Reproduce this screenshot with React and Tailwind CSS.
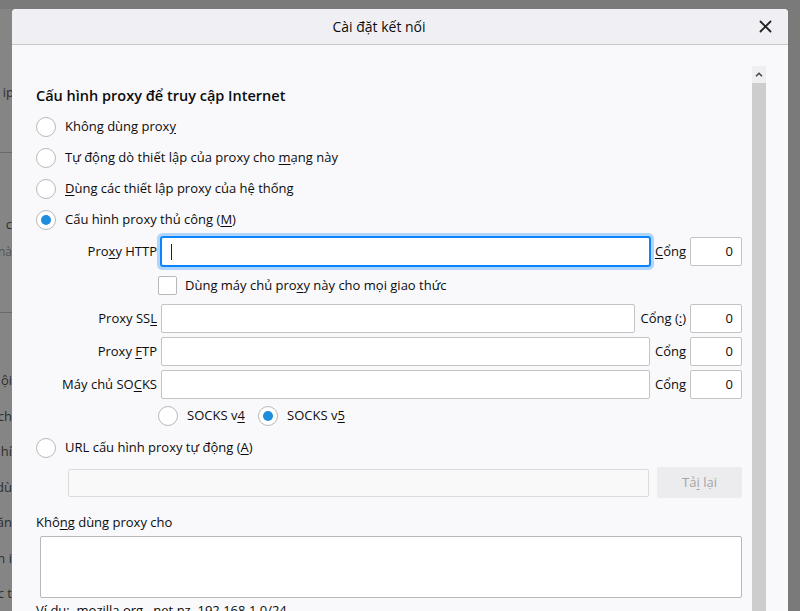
import React from 'react';

const font = { fontFamily: '"Open Sans", "Noto Sans", sans-serif' };

function Radio({ checked }) {
  return (
    <span className="flex h-[20px] w-[20px] shrink-0 items-center justify-center rounded-full border border-[#b8b8ba] bg-white">
      {checked && <span className="h-[10px] w-[10px] rounded-full bg-[#1f8ddb]" />}
    </span>
  );
}

function RadioRow({ checked, children }) {
  return (
    <div className="flex h-[31px] items-center gap-[9px]">
      <Radio checked={checked} />
      <span>{children}</span>
    </div>
  );
}

function Field({ label, port, focused, className = '' }) {
  return (
    <div className={`flex h-[29px] shrink-0 items-center ${className}`}>
      <span className="w-[121px] shrink-0 text-right">{label}</span>
      <div
        className={`ml-[4px] flex h-full flex-1 items-center rounded-[2px] bg-white px-[9px] ${
          focused
            ? 'border border-[#0a84ff] shadow-[0_0_0_1px_#0a84ff,0_0_0_4px_rgba(10,132,255,0.3)]'
            : 'border border-[#c4c4c6]'
        }`}
      >
        {focused && <span className="h-[16px] w-px bg-[#222]" />}
      </div>
      <span className="ml-[5px] shrink-0">{port}</span>
      <div className="ml-[4px] flex h-full w-[52px] shrink-0 items-center justify-end rounded-[2px] border border-[#c4c4c6] bg-white pr-[8px]">
        0
      </div>
    </div>
  );
}

const u = (s) => <u className="underline-offset-2">{s}</u>;

export default function App() {
  return (
    <div className="flex h-[611px] w-[800px] overflow-hidden bg-[#7a7a7a] text-[13px] text-[#0c0c0d]" style={font}>
      {/* dimmed page behind the dialog */}
      <div className="flex w-[12px] shrink-0 flex-col pt-[9px] text-[13px] text-[#2e2e2e]">
        <div className="flex h-[144px] shrink-0 flex-col justify-end overflow-hidden border-b border-[#6a6a6a] bg-[#858585] pb-[50px]">
          <span className="-mr-[2px] self-end whitespace-nowrap">ip</span>
        </div>
        <div className="flex h-[160px] shrink-0 flex-col overflow-hidden border-b border-[#6a6a6a] bg-[#858585] pt-[62px]">
          <span className="self-end whitespace-nowrap">c</span>
          <span className="mt-[8px] self-end whitespace-nowrap text-[12px] text-[#555]">nà</span>
        </div>
        <div className="flex flex-1 flex-col gap-[16px] overflow-hidden bg-[#858585] pt-[58px]">
          <span className="self-end whitespace-nowrap">ội</span>
          <span className="self-end whitespace-nowrap">ch</span>
          <span className="self-end whitespace-nowrap">hí</span>
          <span className="self-end whitespace-nowrap">dù</span>
          <span className="self-end whitespace-nowrap">ăn</span>
          <span className="self-end whitespace-nowrap">n i</span>
          <span className="self-end whitespace-nowrap">c t</span>
        </div>
      </div>

      {/* dialog */}
      <div className="mt-[9px] flex w-[776px] shrink-0 flex-col overflow-hidden rounded-t-[4px] bg-[#f9f9fb]">
        <div className="relative flex h-[36px] shrink-0 items-center justify-center border-b border-[#c8c8ca] bg-[#f0f0f4] text-[14px]">
          <span className="-ml-[42px]">Cài đặt kết nối</span>
          <svg className="absolute right-[16px] top-[11px]" width="13" height="13" viewBox="0 0 13 13">
            <path d="M1.5 1.5 L11.5 11.5 M11.5 1.5 L1.5 11.5" stroke="#222" strokeWidth="1.8" strokeLinecap="round" />
          </svg>
        </div>

        <div className="flex flex-1 overflow-hidden">
          <div className="ml-[24px] flex w-[706px] shrink-0 flex-col *:shrink-0">
            <h2 className="mt-[41px] h-[20px] text-[14.5px] font-semibold leading-[20px]">Cấu hình proxy để truy cập Internet</h2>
            <div className="mt-[5px]">
              <RadioRow>Không dùng prox{u('y')}</RadioRow>
              <RadioRow>Tự động dò thiết lập của proxy cho {u('m')}ạng này</RadioRow>
              <RadioRow>{u('D')}ùng các thiết lập proxy của hệ thống</RadioRow>
              <RadioRow checked>Cấu hình proxy thủ công ({u('M')})</RadioRow>
            </div>

            <Field className="mt-[2px]" focused label={<>Pro{u('x')}y HTTP</>} port={<>{u('C')}ổng</>} />

            <div className="mt-[10px] flex h-[19px] items-center">
              <span className="ml-[122px] h-[19px] w-[19px] shrink-0 rounded-[2px] border border-[#b8b8ba] bg-white" />
              <span className="ml-[8px]">Dùng máy chủ pro{u('x')}y này cho mọi giao thức</span>
            </div>

            <Field className="mt-[9px]" label={<>Proxy SS{u('L')}</>} port={<>Cổng ({u(':')})</>} />
            <Field className="mt-[4px]" label={<>Proxy {u('F')}TP</>} port={<>Cổn{u('g')}</>} />
            <Field className="mt-[4px]" label={<>Máy chủ SO{u('C')}KS</>} port={<>Cổn{u('g')}</>} />

            <div className="mt-[7px] flex h-[20px] items-center pl-[122px]">
              <Radio />
              <span className="ml-[9px] w-[71px]">SOCKS v{u('4')}</span>
              <Radio checked />
              <span className="ml-[9px]">SOCKS v{u('5')}</span>
            </div>

            <div className="mt-[6px]">
              <RadioRow>URL cấu hình proxy tự động ({u('A')})</RadioRow>
            </div>

            <div className="mt-[4px] flex h-[31px] items-center">
              <div className="ml-[32px] h-[28px] flex-1 rounded-[2px] border border-[#dcdcde] bg-[#f9f9fa]" />
              <div className="ml-[8px] flex h-[31px] w-[85px] shrink-0 items-center justify-center rounded-[2px] bg-[#ececef] text-[#a4a4a6]">
                <span>Tả{u('i')} lại</span>
              </div>
            </div>

            <div className="mt-[15px] h-[18px] leading-[18px]">Khô{u('n')}g dùng proxy cho</div>
            <div className="ml-[4px] mt-[5px] h-[62px] rounded-[2px] border border-[#b8b8ba] bg-white" />
            <div className="mt-[3px] whitespace-nowrap">Ví dụ: .mozilla.org, .net.nz, 192.168.1.0/24</div>
          </div>

          {/* scrollbar */}
          <div className="ml-[10px] mt-[21px] flex w-[14px] shrink-0 flex-col">
            <div className="flex h-[17px] items-center justify-center bg-[#efeff1]">
              <svg width="8" height="5" viewBox="0 0 8 5">
                <path d="M1 4.2 L4 1.2 L7 4.2" stroke="#444" strokeWidth="1.5" fill="none" />
              </svg>
            </div>
            <div className="flex-1 bg-[#cdcdcd]" />
          </div>
        </div>
      </div>
      <div className="flex-1" />
    </div>
  );
}
